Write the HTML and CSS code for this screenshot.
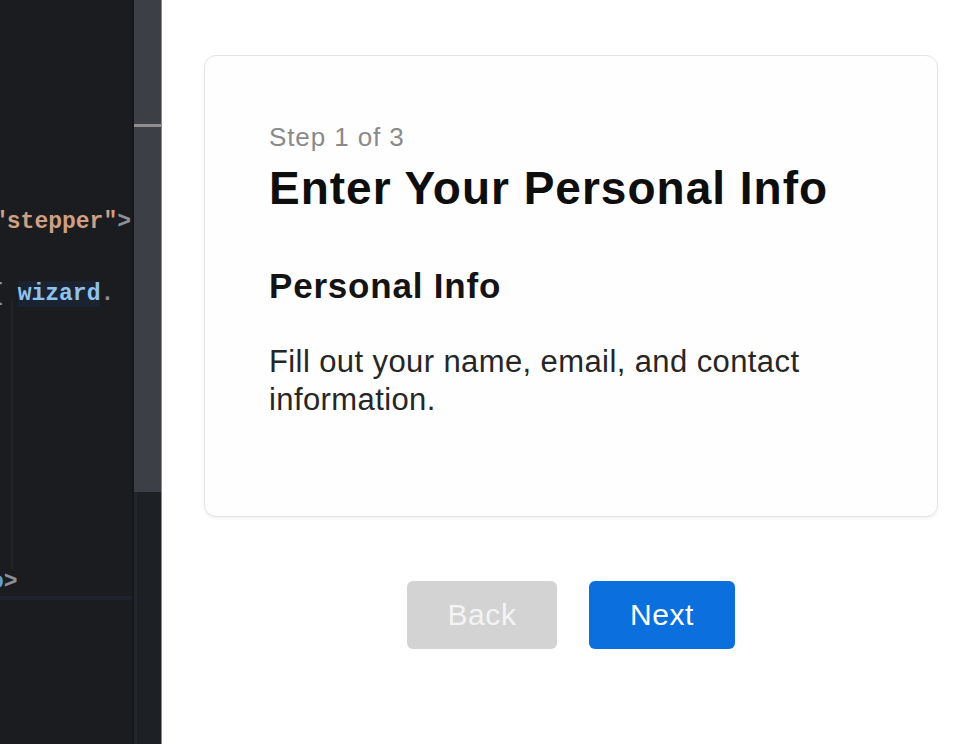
FILE: index.html
```html
<!DOCTYPE html>
<html lang="en">
<head>
<meta charset="utf-8">
<title>Stepper Wizard</title>
<link rel="stylesheet" href="styles.css">
</head>
<body>
<div class="app">
  <div class="editor">
    <div class="guide"></div>
    <div class="code">
      <div class="line"></div>
      <div class="line"></div>
      <div class="line"></div>
      <div class="line"></div>
      <div class="line"></div>
      <div class="line shift-a"><span class="str">"stepper"</span><span class="punc">&gt;</span></div>
      <div class="line"></div>
      <div class="line shift-b"><span class="punc">{</span> <span class="var sel">wizard</span><span class="punc">.</span></div>
      <div class="line"></div>
      <div class="line"></div>
      <div class="line"></div>
      <div class="line"></div>
      <div class="line"></div>
      <div class="line"></div>
      <div class="line"></div>
      <div class="line current shift-c"><span class="tag">o</span><span class="punc">&gt;</span></div>
    </div>
  </div>
  <div class="scrollbar">
    <div class="thumb"><div class="marker"></div></div>
    <div class="track"></div>
  </div>
  <main class="preview">
    <section class="card">
      <p class="step">Step 1 of 3</p>
      <h1 class="title">Enter Your Personal Info</h1>
      <h2 class="subtitle">Personal Info</h2>
      <p class="desc">Fill out your name, email, and contact information.</p>
    </section>
    <div class="actions">
      <button class="btn btn-back" disabled>Back</button>
      <button class="btn btn-next">Next</button>
    </div>
  </main>
</div>
</body>
</html>
```
FILE: styles.css
```css
* { box-sizing: border-box; }
html, body { margin: 0; padding: 0; height: 100%; }
body { background: #ffffff; font-family: "Liberation Sans", Arial, sans-serif; overflow: hidden; }

.app { display: flex; height: 744px; }

.editor {
  position: relative;
  width: 134px;
  flex: none;
  background: #1a1c20;
  overflow: hidden;
  border-right: 2px solid #141619;
}
.guide {
  position: absolute;
  left: 11px; top: 300px;
  width: 2px; height: 270px;
  background: #1f2227;
}
.code {
  padding-top: 24px;
  font-family: "Liberation Mono", "DejaVu Sans Mono", monospace;
  font-size: 23px;
  font-weight: bold;
}
.line { height: 36px; line-height: 36px; white-space: pre; }
.shift-a { margin-left: -7px; }
.shift-b { margin-left: -10px; }
.shift-c { margin-left: -10px; }
.str { color: #cf9f84; }
.punc { color: #8d9097; }
.var { color: #8fc3ee; }
.tag { color: #5f9ed8; }
.sel { background: #1c2330; }
.current { box-shadow: inset 0 -6px 0 -2px #1e222c; }

.scrollbar {
  width: 28px;
  flex: none;
  display: flex;
  flex-direction: column;
  border-right: 1px solid #8a8a8a;
  background: #1f2226;
}
.thumb {
  height: 492px;
  background: #3c3f45;
  padding-top: 124px;
}
.marker { height: 3px; background: #8e8e90; }
.track { flex: 1; background: #1d2024; border-left: 3px solid #22252a; }

.preview {
  flex: 1;
  padding: 55px 30px 0 42px;
  background: #ffffff;
}

.card {
  border: 1px solid #e4e4e4;
  border-radius: 12px;
  padding: 66px 40px 97px 64px;
  box-shadow: 0 2px 3px rgba(0,0,0,0.05);
  background: #fefefe;
}
.step {
  margin: 0;
  font-size: 26px;
  line-height: 30px;
  letter-spacing: 0.9px;
  color: #8a8a8a;
}
.title {
  margin: 9px 0 0;
  font-size: 46px;
  line-height: 54px;
  font-weight: bold;
  letter-spacing: 1px;
  color: #0e0e0e;
}
.subtitle {
  margin: 50px 0 0;
  font-size: 35px;
  line-height: 42px;
  font-weight: bold;
  letter-spacing: 0.8px;
  color: #141414;
}
.desc {
  margin: 36px 0 0;
  font-size: 31px;
  line-height: 38px;
  letter-spacing: 0.4px;
  color: #262626;
}

.actions {
  display: flex;
  justify-content: center;
  gap: 32px;
  margin-top: 64px;
}
.btn {
  height: 68px;
  padding: 0 40px;
  border: none;
  border-radius: 6px;
  font-family: "Liberation Sans", Arial, sans-serif;
  font-size: 30px;
  letter-spacing: 0.6px;
  color: #ffffff;
}
.btn-back { background: #d3d3d3; color: #f4f4f4; width: 150px; }
.btn-next { background: #0b6fde; width: 146px; }
```
